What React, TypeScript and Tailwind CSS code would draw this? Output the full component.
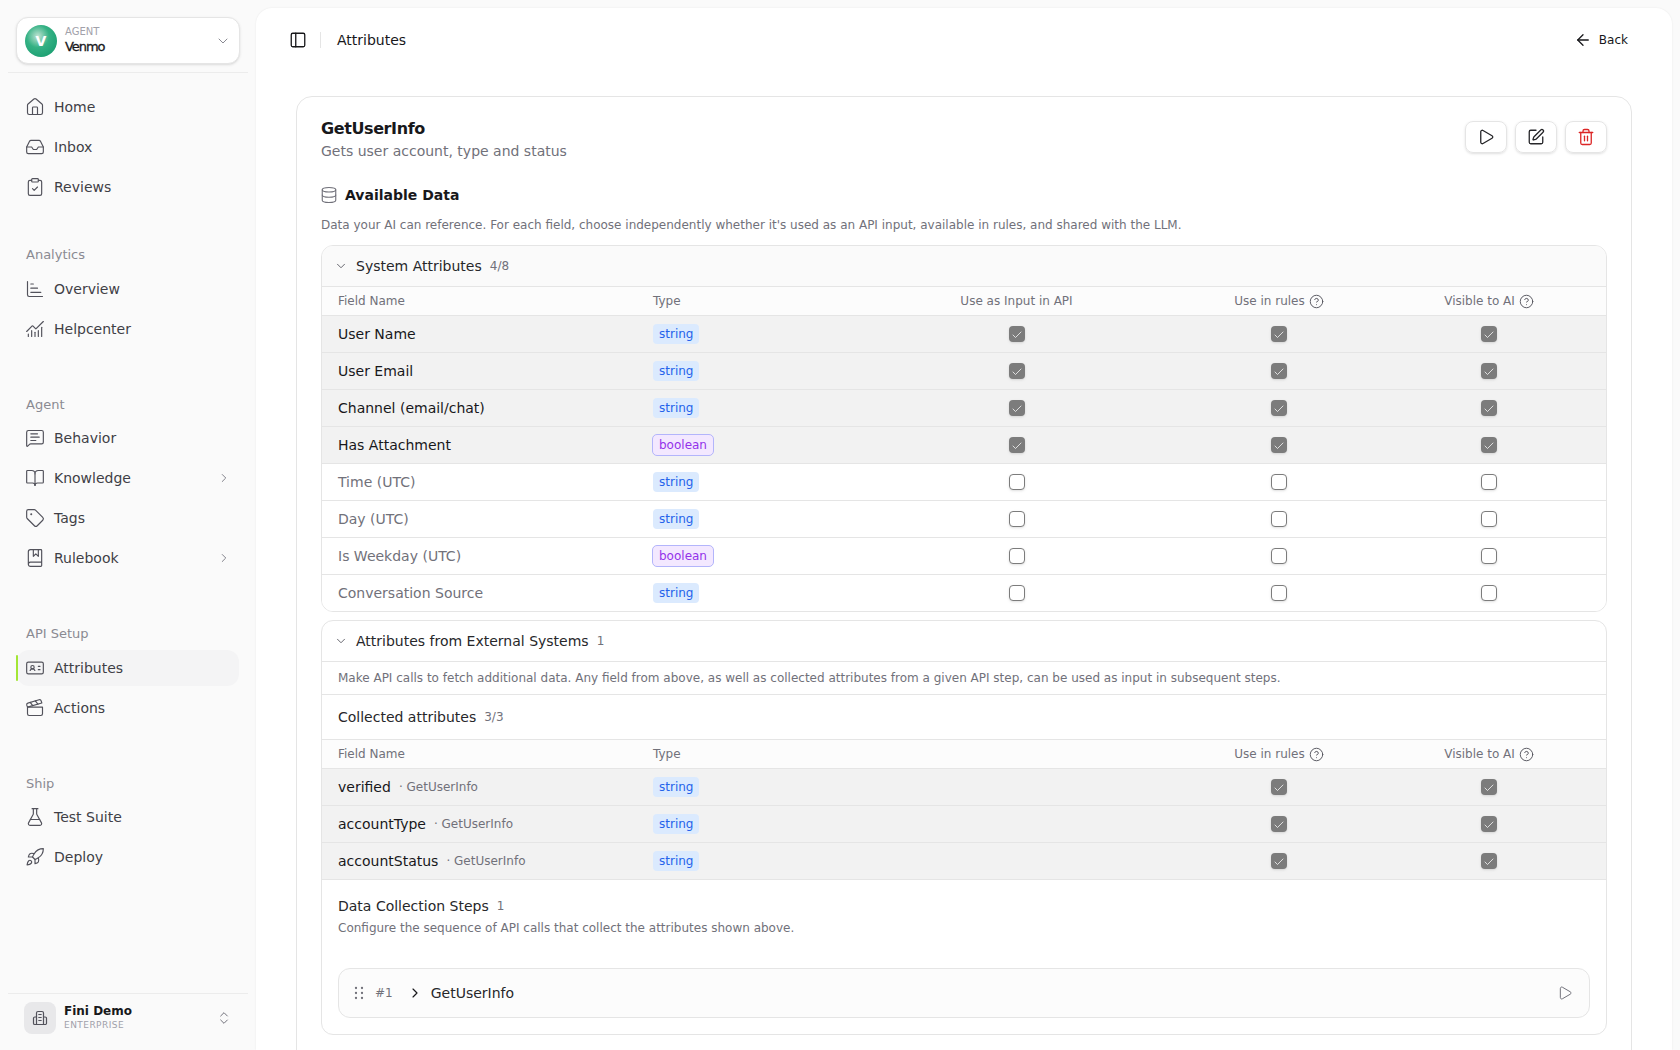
import React from "react";
import {
  House, Inbox, ClipboardCheck, ChartBarIncreasing, ChartNoAxesCombined, MessageSquareText, BookOpen, Tag, BookMarked,
  IdCard, Clapperboard, FlaskConical, Rocket, ChevronDown, ChevronRight, ChevronsUpDown, PanelLeft, ArrowLeft, Play,
  SquarePen, Trash2, Database, CircleHelp, Check,
} from "lucide-react";

const COLS = "grid grid-cols-[315px_211px_338px_186px_234px] items-center";

function NavItem({ icon: Icon, label, arrow, active }: { icon: any; label: string; arrow?: boolean; active?: boolean }) {
  return (
    <div className={"relative flex h-9 items-center gap-[9px] rounded-xl pl-2 pr-2 text-sm text-[#3f3f46] " + (active ? "bg-[#f4f4f5]" : "")}>
      {active && <span className="absolute -left-px top-[5px] h-[26px] w-[2px] rounded-full bg-[#a3e635]" />}
      <Icon size={20} strokeWidth={1.4} className="shrink-0 text-[#52525b]" />
      <span className="flex-1 leading-5">{label}</span>
      {arrow && <ChevronRight size={14} strokeWidth={1.5} className="text-[#71717a]" />}
    </div>
  );
}

function GroupLabel({ children, cls }: { children: string; cls: string }) {
  return <div className={"h-5 pl-[9px] text-[13px] leading-5 text-[#8a8a92] " + cls}>{children}</div>;
}

function Box({ on }: { on: boolean }) {
  return on ? (
    <span className="flex size-4 items-center justify-center rounded-[4px] bg-[#7c7c7c] shadow-sm">
      <Check size={12} strokeWidth={1.5} className="mt-px text-white" />
    </span>
  ) : (
    <span className="block size-4 rounded-[4px] border border-[#7c7c7c] bg-white shadow-sm" />
  );
}

function TypeBadge({ type }: { type: string }) {
  return type === "boolean" ? (
    <span className="flex h-[22px] items-center rounded-[5px] border border-[#b3b5fb] bg-[#f3e8ff] px-1.5 text-xs text-[#9333ea]">boolean</span>
  ) : (
    <span className="ml-px flex h-5 items-center rounded-[4px] bg-[#dbeafe] px-1.5 text-xs text-[#2563eb]">string</span>
  );
}

function Center({ children }: { children: React.ReactNode }) {
  return <div className="flex items-center justify-center">{children}</div>;
}

function Help({ label }: { label: string }) {
  return (
    <div className="flex items-center justify-center gap-1">
      <span>{label}</span>
      <CircleHelp size={15} strokeWidth={1.5} className="text-[#52525b]" />
    </div>
  );
}

function HeadRow({ withInput }: { withInput: boolean }) {
  return (
    <div className={COLS + " h-[29px] border-b border-[#e5e5e5] bg-[#fcfcfc] text-xs text-[#71717a]"}>
      <div className="pl-4">Field Name</div>
      <div className="pl-4">Type</div>
      <div className="pr-px text-center">{withInput ? "Use as Input in API" : ""}</div>
      <Help label="Use in rules" />
      <Help label="Visible to AI" />
    </div>
  );
}

function Row({ name, type, on, input, source, last }: { name: string; type: string; on: boolean; input: boolean; source?: boolean; last?: boolean }) {
  return (
    <div className={COLS + " " + (last ? "h-9 " : "h-[37px] border-b border-[#e5e5e5] ") + (on ? "bg-[#f2f2f2]" : "bg-white")}>
      <div className={"flex items-center gap-2 pl-4 text-sm " + (on ? "text-[#18181b]" : "text-[#71717a]")}>
        <span>{name}</span>
        {source && <span className="text-xs text-[#71717a]">· GetUserInfo</span>}
      </div>
      <div className="flex pl-[15px]"><TypeBadge type={type} /></div>
      <Center>{input && <Box on={on} />}</Center>
      <Center><Box on={on} /></Center>
      <Center><Box on={on} /></Center>
    </div>
  );
}

const SYSTEM = [
  ["User Name", "string", true],
  ["User Email", "string", true],
  ["Channel (email/chat)", "string", true],
  ["Has Attachment", "boolean", true],
  ["Time (UTC)", "string", false],
  ["Day (UTC)", "string", false],
  ["Is Weekday (UTC)", "boolean", false],
  ["Conversation Source", "string", false],
] as const;

function BuildingIcon() {
  return (
    <svg width="16" height="16" viewBox="0 0 16 16" fill="none" stroke="#52525b" strokeWidth="1.2" strokeLinejoin="round" strokeLinecap="round">
      <path d="M4.5 14.5V3a1.5 1.5 0 0 1 1.5-1.5h4A1.5 1.5 0 0 1 11.5 3v11.5" />
      <path d="M4.5 7H2.8A1.3 1.3 0 0 0 1.5 8.3v4.9a1.3 1.3 0 0 0 1.3 1.3h10.4a1.3 1.3 0 0 0 1.3-1.3V8.3A1.3 1.3 0 0 0 13.2 7h-1.7" />
      <path d="M6.8 4.5h2.4M6.8 7.5h2.4M6.8 10.5h2.4" />
    </svg>
  );
}

function GripIcon() {
  return (
    <svg width="14" height="14" viewBox="0 0 14 14" fill="#71717a">
      <circle cx="4" cy="2" r="1.15" />
      <circle cx="10" cy="2" r="1.15" />
      <circle cx="4" cy="7" r="1.15" />
      <circle cx="10" cy="7" r="1.15" />
      <circle cx="4" cy="12" r="1.15" />
      <circle cx="10" cy="12" r="1.15" />
    </svg>
  );
}

export default function App() {
  return (
    <div className="flex h-screen overflow-hidden bg-[#fafafa] font-['DejaVu_Sans',sans-serif]">
      <aside className="flex w-[256px] shrink-0 flex-col">
        <div className="mx-2 mt-2 h-[65px] border-b border-[#ececec] px-2 pt-[9px]">
          <div className="flex h-[47px] items-center rounded-xl border border-[#e5e5e5] bg-white pl-2 pr-2 shadow-sm">
            <div className="flex size-8 items-center justify-center rounded-full bg-[radial-gradient(circle_at_40%_35%,#bfe3d2_0%,#34b184_40%,#0f9668_100%)] text-sm font-bold text-white">V</div>
            <div className="ml-2 flex-1">
              <div className="text-[10px] leading-3 text-[#a1a1aa]">AGENT</div>
              <div className="mt-px text-[13px] leading-4 tracking-[-0.08em] text-[#18181b] [-webkit-text-stroke:0.3px_#18181b]">Venmo</div>
            </div>
            <ChevronDown size={16} strokeWidth={1.5} className="text-[#8a8a92]" />
          </div>
        </div>
        <nav className="flex flex-1 flex-col px-[17px] pt-4">
          <div className="flex flex-col gap-1">
            <NavItem icon={House} label="Home" />
            <NavItem icon={Inbox} label="Inbox" />
            <NavItem icon={ClipboardCheck} label="Reviews" />
          </div>
          <GroupLabel cls="mb-[6px] mt-10">Analytics</GroupLabel>
          <div className="flex flex-col gap-1">
            <NavItem icon={ChartBarIncreasing} label="Overview" />
            <NavItem icon={ChartNoAxesCombined} label="Helpcenter" />
          </div>
          <GroupLabel cls="mb-[5px] mt-12">Agent</GroupLabel>
          <div className="flex flex-col gap-1">
            <NavItem icon={MessageSquareText} label="Behavior" />
            <NavItem icon={BookOpen} label="Knowledge" arrow />
            <NavItem icon={Tag} label="Tags" />
            <NavItem icon={BookMarked} label="Rulebook" arrow />
          </div>
          <GroupLabel cls="mb-[6px] mt-12">API Setup</GroupLabel>
          <div className="flex flex-col gap-1">
            <NavItem icon={IdCard} label="Attributes" active />
            <NavItem icon={Clapperboard} label="Actions" />
          </div>
          <GroupLabel cls="mb-[5px] mt-12">Ship</GroupLabel>
          <div className="flex flex-col gap-1">
            <NavItem icon={FlaskConical} label="Test Suite" />
            <NavItem icon={Rocket} label="Deploy" />
          </div>
        </nav>
        <div className="mx-2 flex h-[57px] items-start border-t border-[#ececec] pl-4 pr-[8px] pt-2">
          <div className="flex size-8 items-center justify-center rounded-lg bg-[#e8e8ea]"><BuildingIcon /></div>
          <div className="ml-2 mt-[2px] flex-1">
            <div className="text-xs font-bold leading-[15px] text-[#18181b]">Fini Demo</div>
            <div className="text-[9px] leading-3 tracking-[0.05em] text-[#a1a1aa]">ENTERPRISE</div>
          </div>
          <ChevronsUpDown size={16} strokeWidth={1.5} className="mr-2 mt-2 text-[#71717a]" />
        </div>
      </aside>

      <main className="mr-2 mt-2 flex-1 overflow-hidden rounded-t-2xl bg-white shadow-[0_0_2px_rgba(0,0,0,0.08)]">
        <header className="flex h-16 items-center pl-[33px] pr-11">
          <PanelLeft size={18} strokeWidth={1.75} className="text-[#18181b]" />
          <span className="ml-[13px] h-4 w-px bg-[#e5e5e5]" />
          <span className="ml-4 flex-1 text-sm text-[#18181b]">Attributes</span>
          <ArrowLeft size={18} strokeWidth={1.75} className="text-[#18181b]" />
          <span className="ml-[7px] text-xs text-[#18181b]">Back</span>
        </header>

        <section className="mx-10 mt-6 rounded-2xl border border-[#e5e5e5] px-6 pb-10 pt-5">
          <div className="flex items-start justify-between">
            <div>
              <h1 className="text-base font-bold leading-6 tracking-tight text-[#18181b]">GetUserInfo</h1>
              <p className="text-sm leading-5 text-[#71717a]">Gets user account, type and status</p>
            </div>
            <div className="mt-1 flex gap-2">
              <button className="flex h-8 w-[42px] items-center justify-center rounded-lg border border-[#e5e5e5] shadow-sm"><Play size={18} strokeWidth={1.75} className="text-[#27272a]" /></button>
              <button className="flex h-8 w-[42px] items-center justify-center rounded-lg border border-[#e5e5e5] shadow-sm"><SquarePen size={18} strokeWidth={1.75} className="text-[#27272a]" /></button>
              <button className="flex h-8 w-[42px] items-center justify-center rounded-lg border border-[#e5e5e5] shadow-sm"><Trash2 size={18} strokeWidth={1.75} className="text-[#dc2626]" /></button>
            </div>
          </div>

          <div className="mt-6 flex items-center">
            <Database size={18} strokeWidth={1.5} className="-ml-px text-[#71717a]" />
            <span className="ml-[7px] text-sm font-bold leading-5 text-[#18181b]">Available Data</span>
          </div>
          <p className="mt-3 text-xs leading-4 text-[#71717a]">Data your AI can reference. For each field, choose independently whether it's used as an API input, available in rules, and shared with the LLM.</p>

          <div className="mt-3 overflow-hidden rounded-xl border border-[#e5e5e5]">
            <div className="flex h-[41px] items-center border-b border-[#e5e5e5] bg-[#fafafa] pl-3">
              <ChevronDown size={14} strokeWidth={1.5} className="text-[#52525b]" />
              <span className="ml-2 text-sm text-[#27272a]">System Attributes</span>
              <span className="ml-2 text-xs text-[#71717a]">4/8</span>
            </div>
            <HeadRow withInput />
            {SYSTEM.map((r, i) => (
              <Row key={r[0]} name={r[0]} type={r[1]} on={r[2]} input last={i === SYSTEM.length - 1} />
            ))}
          </div>

          <div className="mt-2 overflow-hidden rounded-xl border border-[#e5e5e5]">
            <div className="flex h-[41px] items-center border-b border-[#e5e5e5] pl-3">
              <ChevronDown size={14} strokeWidth={1.5} className="text-[#52525b]" />
              <span className="ml-2 text-sm text-[#27272a]">Attributes from External Systems</span>
              <span className="ml-2 text-xs text-[#71717a]">1</span>
            </div>
            <div className="flex h-[33px] items-center border-b border-[#e5e5e5] pl-4 text-xs text-[#71717a]">
              Make API calls to fetch additional data. Any field from above, as well as collected attributes from a given API step, can be used as input in subsequent steps.
            </div>
            <div className="flex h-[45px] items-center border-b border-[#e5e5e5] pl-4">
              <span className="text-sm text-[#27272a]">Collected attributes</span>
              <span className="ml-2 text-xs text-[#71717a]">3/3</span>
            </div>
            <HeadRow withInput={false} />
            <Row name="verified" type="string" on input={false} source />
            <Row name="accountType" type="string" on input={false} source />
            <Row name="accountStatus" type="string" on input={false} source />
            <div className="px-4 pb-4 pt-4">
              <div className="flex items-center leading-5">
                <span className="text-sm text-[#27272a]">Data Collection Steps</span>
                <span className="ml-2 text-xs text-[#71717a]">1</span>
              </div>
              <p className="mt-1 text-xs leading-4 text-[#71717a]">Configure the sequence of API calls that collect the attributes shown above.</p>
              <div className="mt-8 flex h-[50px] items-center rounded-xl border border-[#e5e5e5] bg-[#fcfcfc] pl-[13px] pr-4">
                <GripIcon />
                <span className="ml-[9px] text-xs text-[#71717a]">#1</span>
                <ChevronRight size={16} strokeWidth={1.75} className="ml-[14px] text-[#18181b]" />
                <span className="ml-2 flex-1 text-sm text-[#27272a]">GetUserInfo</span>
                <Play size={16} strokeWidth={1.5} className="text-[#71717a]" />
              </div>
            </div>
          </div>
        </section>
      </main>
    </div>
  );
}
